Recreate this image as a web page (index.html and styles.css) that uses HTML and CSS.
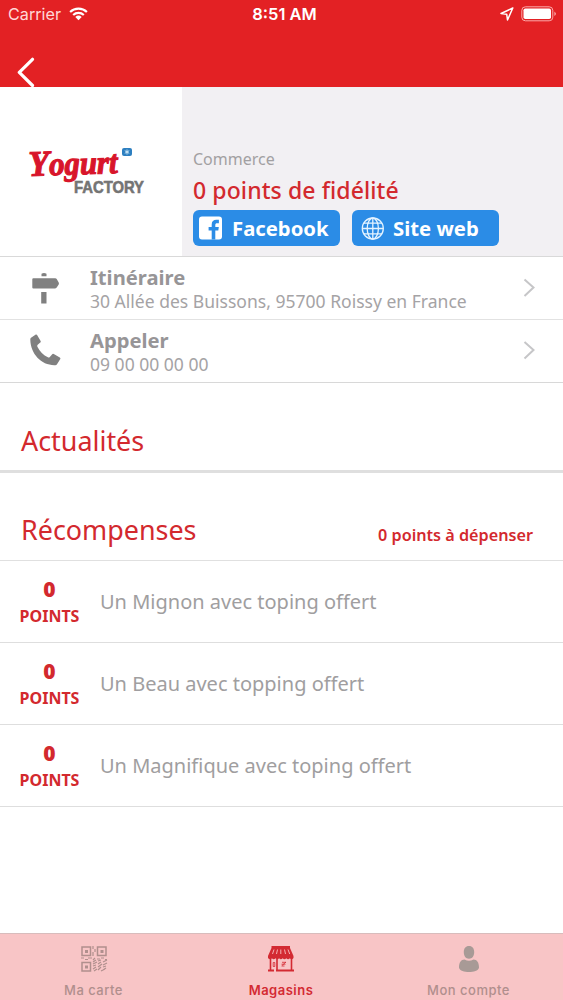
FILE: index.html
```html
<!DOCTYPE html>
<html lang="fr">
<head>
<meta charset="utf-8">
<title>Yogurt Factory</title>
<link rel="stylesheet" href="styles.css">
</head>
<body>
<div class="app">
  <header class="header">
    <div class="status">
      <div class="status-left"><span class="carrier">Carrier</span>
        <svg class="wifi" width="19" height="14" viewBox="0 0 20 15"><g fill="none" stroke="#fff" stroke-width="2.3"><path d="M1 5.300a13 13 0 0 1 18 0"/><path d="M4.300 8.600a8.300 8.300 0 0 1 11.400 0"/></g><path d="M6.600 10.700a5 5 0 0 1 6.800 0L10 14.200z" fill="#fff"/></svg>
      </div>
      <span class="clock">8:51 AM</span>
      <div class="status-right">
        <svg width="14" height="14" viewBox="0 0 14 14"><path d="M12.800 1 1 6.500l5.700.7.800 5.800z" fill="none" stroke="#fff" stroke-width="1.500" stroke-linejoin="round"/></svg>
        <svg width="36" height="16" viewBox="0 0 36 16"><rect x=".8" y=".8" width="31" height="14" rx="3.600" fill="none" stroke="#fba9a9" stroke-width="1"/><rect x="2.500" y="2.500" width="27.500" height="10.600" rx="1.800" fill="#fff"/><path d="M33.400 5.500q3 2.300 0 4.600z" fill="#fba9a9"/></svg>
      </div>
    </div>
    <svg class="back" width="18" height="30" viewBox="0 0 18 30"><path d="M15.500 2.300 2.300 15.400l13.200 13.100" fill="none" stroke="#fff" stroke-width="3.200" stroke-linecap="round" stroke-linejoin="round"/></svg>
  </header>

  <section class="store">
    <div class="logo">
      <svg width="182" height="169" viewBox="0 0 182 169">
        <text class="logo-script" x="29" y="89" textLength="89" lengthAdjust="spacingAndGlyphs" transform="rotate(-2 30 90)"><tspan class="logo-cap">Y</tspan>ogurt</text>
        <text class="logo-block" x="74" y="105.500" textLength="70" lengthAdjust="spacingAndGlyphs">FACTORY</text>
        <rect x="122" y="61" width="10" height="8" rx="2" fill="#2d7fc0"/>
        <path d="M127 62.500v5M124.800 63.700l4.400 2.600M129.200 63.700l-4.400 2.600" stroke="#d6edfb" stroke-width=".9"/>
      </svg>
    </div>
    <div class="store-info">
      <div class="category">Commerce</div>
      <div class="loyalty">0 points de fidélité</div>
      <div class="buttons">
        <div class="btn">
          <svg width="24" height="24" viewBox="0 0 24 24"><rect y=".5" width="23" height="23" rx="3" fill="#fff"/><path d="M12.700 23.500v-9H9.600v-3.600h3.100V8.500c0-3.200 1.800-4.700 4.700-4.700h2.500v3.500h-1.700c-1.400 0-1.900.6-1.900 1.900v1.700h3.500l-.5 3.600h-3v9z" fill="#2b8ce6"/></svg>
          <span>Facebook</span>
        </div>
        <div class="btn">
          <svg width="24" height="24" viewBox="0 0 24 24"><g fill="none" stroke="#e4f3ff" stroke-width="1.300"><circle cx="11.800" cy="12.500" r="10.500"/><ellipse cx="11.800" cy="12.500" rx="5.600" ry="10.500"/><path d="M11.800 2v21M1.300 12.500h21M2.900 7.200h17.800M2.900 17.800h17.800"/></g></svg>
          <span>Site web</span>
        </div>
      </div>
    </div>
  </section>

  <div class="action">
    <svg class="action-icon" width="32" height="34" viewBox="0 0 32 34"><path d="M11.500 2.800q2.500-1.600 5 0v2.500h-5zM2.300 8.300q0-1 1-1h21.900q1 0 1.500.8l2 3.500q.5.900 0 1.800l-2 3.200q-.5.800-1.500.8H3.300q-1 0-1-1zM11.200 21h5.300v11.500h-5.300z" fill="#808080"/></svg>
    <div class="action-text"><div class="action-title">Itinéraire</div><div class="action-sub">30 Allée des Buissons, 95700 Roissy en France</div></div>
    <svg class="chevron" width="14" height="20" viewBox="0 0 14 20"><path d="m1.500 1.500 9 8-9 8.500" fill="none" stroke="#c6c6c8" stroke-width="2"/></svg>
  </div>
  <div class="action last">
    <svg class="action-icon" width="32" height="34" viewBox="0 0 32 34"><path d="M1 3.800 5.800.6q.8-.5 1.300.4l3.500 5.900q.6 1-.3 1.700L7.700 10.800q-.9.800-.3 1.900c2.200 4.700 6.100 8.500 10.500 10.600q1.100.5 1.900-.4l2.200-2.500q.8-.9 1.800-.3l6 3.400q1 .6.500 1.500L27 30.200q-.5.900-1.700 1C11.800 31.800.5 20.300.3 5.600Q.2 4.400 1 3.800z" fill="#808080"/></svg>
    <div class="action-text"><div class="action-title">Appeler</div><div class="action-sub">09 00 00 00 00</div></div>
    <svg class="chevron" width="14" height="20" viewBox="0 0 14 20"><path d="m1.500 1 9 8-9 8.500" fill="none" stroke="#c6c6c8" stroke-width="2"/></svg>
  </div>

  <section class="news"><h2>Actualités</h2></section>
  <section class="rewards-head"><h2>Récompenses</h2><span class="spend">0 points à dépenser</span></section>

  <div class="reward"><div class="pts"><b>0</b><span>POINTS</span></div><div class="reward-name">Un Mignon avec toping offert</div></div>
  <div class="reward"><div class="pts"><b>0</b><span>POINTS</span></div><div class="reward-name">Un Beau avec topping offert</div></div>
  <div class="reward"><div class="pts"><b>0</b><span>POINTS</span></div><div class="reward-name">Un Magnifique avec toping offert</div></div>

  <nav class="tabs">
    <div class="tab">
      <svg width="28" height="28" viewBox="0 0 28 28"><g fill="none" stroke="#b08f8d" stroke-width="1.500"><path d="M2 2h8.500v8.500H2zM17.500 2H26v8.500h-8.500zM2 17.500h8.500V26H2z"/><path d="M13 1v3m2 0v3m-2 0v4M1 13h3m1 1.500h3M8 13h4m1 2 2-2m2 1h3m1-1h3m1 1.500h2M13 17l3-2m2 1 3-1m2 2 4-2M13 19l4-2m1 2 3-2m2 3 4-2m-14 3 3-1m2 2 4-3m1 3 3-1m-13 3 3-2m2 3 3-3m2 3 3-2m-12 3 3-2m4 2 4-2" stroke-width="1.200"/></g><path d="M5 5h3v3H5zM20.500 5h3v3h-3zM5 20.500h3v3H5z" fill="#b08f8d"/></svg>
      <span>Ma carte</span>
    </div>
    <div class="tab active">
      <svg width="28" height="28" viewBox="0 0 28 28"><path d="M4.500 1h18.500v2H4.500zM4.500 3h18.500l3.500 8v2q-1.800 2.500-3.600.2-1.800 2.200-3.600 0-1.800 2.200-3.600 0-1.800 2.200-3.600 0-1.800 2.200-3.600 0-1.800 2.200-3.600 0-1.800 2.200-3.900-.2v-2z" fill="#d32a32"/><path d="M7 4.500 5.500 9m5-4.500L9.500 9m4.300-4.500V9m3.700-4.500 1 4.500m2.500-4.500L22.700 9" stroke="#f5b1b2" stroke-width="1"/><path d="M3.500 13v12M24.500 13v12M10 14v11" stroke="#d32a32" stroke-width="1.600"/><path d="M1 25.500h6M9 25.500h18" stroke="#d32a32" stroke-width="1.800"/><path d="M6.200 17.500h1.600v4H6.200zM15 17.300h4M14.500 19.200h4M14.500 21h3M15 20.500l4-3.500" fill="none" stroke="#d32a32" stroke-width=".8"/></svg>
      <span>Magasins</span>
    </div>
    <div class="tab">
      <svg width="28" height="28" viewBox="0 0 28 28"><path d="M14 1c3.400 0 5.200 2.500 5.200 6.200S17.200 13.700 14 13.700s-5.200-2.800-5.200-6.500S10.600 1 14 1zM9.500 14.600q4.500 2.500 9 0c3.500.2 5.500 2.900 5.500 8.200C23.300 26 18.500 27 14 27s-9.300-1-10-4.200c0-5.300 2-8 5.500-8.200z" fill="#a89a96"/></svg>
      <span>Mon compte</span>
    </div>
  </nav>
</div>
</body>
</html>
```
FILE: styles.css
```css
* { box-sizing: border-box; }
body { margin: 0; background: #fff; font-family: "Noto Sans", "Open Sans", sans-serif; }
svg { display: block; flex: none; }
h2 { margin: 0; font-weight: 400; }
.app { width: 563px; height: 1000px; display: flex; flex-direction: column; background: #fff; overflow: hidden; white-space: nowrap; }

.header { height: 87px; flex: none; background: #e32124; color: #fff; display: flex; flex-direction: column; }
.status { height: 28px; display: grid; grid-template-columns: 1fr auto 1fr; align-items: center; padding: 1px 6px 0 8px; font: 400 16.2px/20px Inter, sans-serif; }
.status-left { display: flex; align-items: center; gap: 8px; }
.carrier { color: #ffd7d7; }
.clock { font-weight: 600; font-size: 16.5px; padding-left: 4px; }
.status-right { display: flex; justify-content: flex-end; align-items: center; gap: 7px; }
.back { margin: 30px 0 0 17px; }

.store { height: 170px; flex: none; display: flex; background: #f2f0f3; border-bottom: 1px solid #d9d9d9; }
.logo { width: 182px; height: 169px; background: #fff; }
.logo-script { font: italic 700 33px "Liberation Serif", serif; fill: #d8152b; stroke: #d8152b; stroke-width: 1.2px; }
.logo-cap { font-size: 36px; }
.logo-block { font: 700 17px "Liberation Sans", sans-serif; fill: #747474; stroke: #747474; stroke-width: .6px; }
.store-info { padding: 61px 0 0 11px; }
.category { font-size: 16px; line-height: 22px; color: #a2a0a2; }
.loyalty { font-size: 23px; line-height: 30px; margin-top: 5px; color: #d3292e; font-weight: 500; letter-spacing: .1px; }
.buttons { display: flex; gap: 12px; margin-top: 5px; }
.btn { width: 147px; height: 36px; border-radius: 6px; background: #2b8ce6; color: #fff; display: flex; align-items: center; gap: 9px; padding-left: 6px; font-weight: 700; font-size: 20.3px; line-height: 35px; }
.btn + .btn { padding-left: 9px; gap: 8px; }

.action { height: 63px; flex: none; display: grid; grid-template-columns: 60px 1fr 14px; align-items: center; padding: 0 26px 0 30px; border-bottom: 1px solid #e2e2e2; }
.action.last { border-color: #d8d8d8; }
.action-text { padding-top: 2px; }
.action-title { font-weight: 700; font-size: 20.2px; line-height: 24px; color: #979597; }
.action-sub { font-size: 17.55px; line-height: 24px; color: #a5a3a5; }

.news { height: 90px; flex: none; border-bottom: 3px solid #dfdfdf; padding: 39px 0 0 21px; }
.news h2, .rewards-head h2 { font-size: 26.9px; line-height: 38px; color: #d3292e; }
.rewards-head { height: 88px; flex: none; display: flex; justify-content: space-between; padding: 38px 30px 0 21px; border-bottom: 1px solid #e0e0e0; }
.spend { font-size: 16.2px; font-weight: 600; line-height: 22px; padding-top: 13px; color: #d3292e; }

.reward { height: 82px; flex: none; display: flex; align-items: center; border-bottom: 1px solid #dedede; }
.pts { width: 99px; text-align: center; color: #d3292e; font-weight: 700; display: flex; flex-direction: column; padding-top: 2px; }
.pts b { font-size: 21px; line-height: 26px; }
.pts span { font-size: 16px; line-height: 28px; }
.reward-name { font-size: 20px; line-height: 28px; color: #a09ea0; padding: 1px 0 0 1px; }

.tabs { height: 67px; flex: none; margin-top: auto; background: #f8c5c6; border-top: 1px solid #d8bcbc; display: grid; grid-template-columns: 187px 188px 187px; }
.tab { display: flex; flex-direction: column; align-items: center; padding-top: 11px; gap: 8px; font: 500 13px/18px Inter, sans-serif; letter-spacing: .5px; color: #b08f8d; }
.tab.active { color: #d32a32; font-weight: 600; }
```
